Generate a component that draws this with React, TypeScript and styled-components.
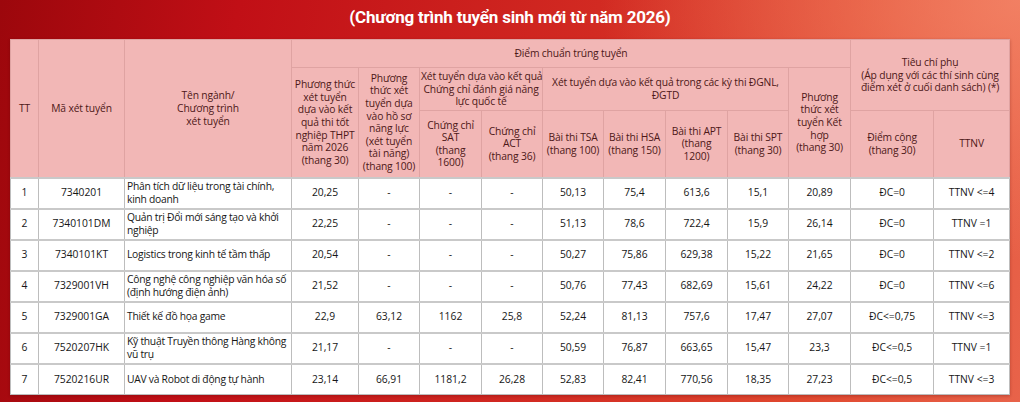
import React from "react";
import styled, { createGlobalStyle } from "styled-components";

const Global = createGlobalStyle`
  html, body { margin: 0; padding: 0; }
  body {
    width: 1020px;
    height: 402px;
    overflow: hidden;
    font-family: "Open Sans", "Noto Sans", sans-serif;
  }
`;

const Page = styled.div`
  width: 1020px;
  height: 402px;
  box-sizing: border-box;
  padding: 0 10px 0 10px;
  display: flex;
  flex-direction: column;
  overflow: hidden;
  background:
    radial-gradient(ellipse 420px 260px at 100% 0%, rgba(246, 140, 110, 0.75), rgba(246, 140, 110, 0) 100%),
    linear-gradient(100deg, #9c070c 0%, #c10f16 22%, #d22a22 55%, #e0482f 80%, #e8634a 100%);
`;

const Title = styled.h1`
  margin: 0;
  height: 39px;
  flex-shrink: 0;
  display: flex;
  align-items: center;
  justify-content: center;
  padding-bottom: 5px;
  box-sizing: border-box;
  color: #ffffff;
  font-family: "Roboto", "Noto Sans", sans-serif;
  font-weight: 700;
  font-size: 17px;
  letter-spacing: -0.2px;
`;

const Table = styled.table`
  width: 999px;
  flex-shrink: 0;
  table-layout: fixed;
  border-collapse: collapse;
  font-size: 10.3px;
  box-shadow: 0 1px 3px rgba(80, 0, 0, 0.3);
`;

const HeadRow = styled.tr<{ $h: number }>`
  height: ${(p) => p.$h}px;
`;

const BodyRow = styled.tr`
  height: 31px;
`;

const HeadCell = styled.th`
  background: #f2b7b6;
  color: #4e1818;
  font-weight: 400;
  border: 1px solid #dfa3a2;
  text-align: center;
  vertical-align: middle;
  line-height: 12.6px;
  padding: 0 1px;
  box-sizing: border-box;
  white-space: nowrap;
  letter-spacing: -0.15px;
`;

const Cell = styled.td<{ $left?: boolean }>`
  background: #ffffff;
  color: #161616;
  border: 1px solid #bdbdbd;
  border-top: 2px solid #c9c9c9;
  text-align: ${(p) => (p.$left ? "left" : "center")};
  vertical-align: middle;
  line-height: 13.5px;
  padding: 0 ${(p) => (p.$left ? "2px" : "3px")};
  letter-spacing: ${(p) => (p.$left ? "-0.25px" : "0")};
  box-sizing: border-box;
  overflow: hidden;
  white-space: nowrap;
`;

const widths = [28, 86, 167, 67, 61, 62, 61, 61, 62, 62, 61, 62, 83, 76];

const rows: string[][] = [
  ["1", "7340201", "Phân tích dữ liệu trong tài chính,\nkinh doanh", "20,25", "-", "-", "-", "50,13", "75,4", "613,6", "15,1", "20,89", "ĐC=0", "TTNV <=4"],
  ["2", "7340101DM", "Quản trị Đổi mới sáng tạo và khởi\nnghiệp", "22,25", "-", "-", "-", "51,13", "78,6", "722,4", "15,9", "26,14", "ĐC=0", "TTNV =1"],
  ["3", "7340101KT", "Logistics trong kinh tế tầm thấp", "20,54", "-", "-", "-", "50,27", "75,86", "629,38", "15,22", "21,65", "ĐC=0", "TTNV <=2"],
  ["4", "7329001VH", "Công nghệ công nghiệp văn hóa số\n(định hướng điện ảnh)", "21,52", "-", "-", "-", "50,76", "77,43", "682,69", "15,61", "24,22", "ĐC=0", "TTNV <=6"],
  ["5", "7329001GA", "Thiết kế đồ họa game", "22,9", "63,12", "1162", "25,8", "52,24", "81,13", "757,6", "17,47", "27,07", "ĐC<=0,75", "TTNV <=3"],
  ["6", "7520207HK", "Kỹ thuật Truyền thông Hàng không\nvũ trụ", "21,17", "-", "-", "-", "50,59", "76,87", "663,65", "15,47", "23,3", "ĐC<=0,5", "TTNV =1"],
  ["7", "7520216UR", "UAV và Robot di động tự hành", "23,14", "66,91", "1181,2", "26,28", "52,83", "82,41", "770,56", "18,35", "27,23", "ĐC<=0,5", "TTNV <=3"],
];

const lines = (s: string) =>
  s.split("\n").map((l, i, a) => (
    <React.Fragment key={i}>
      {l}
      {i < a.length - 1 && <br />}
    </React.Fragment>
  ));

export default function App() {
  return (
    <>
      <Global />
      <Page>
        <Title>(Chương trình tuyển sinh mới từ năm 2026)</Title>
        <Table>
          <colgroup>
            {widths.map((w, i) => (
              <col key={i} style={{ width: w }} />
            ))}
          </colgroup>
          <thead>
            <HeadRow $h={28}>
              <HeadCell rowSpan={3}>TT</HeadCell>
              <HeadCell rowSpan={3}>Mã xét tuyển</HeadCell>
              <HeadCell rowSpan={3}>{lines("Tên ngành/\nChương trình\nxét tuyển")}</HeadCell>
              <HeadCell colSpan={9}>Điểm chuẩn trúng tuyển</HeadCell>
              <HeadCell colSpan={2} rowSpan={2}>
                {lines("Tiêu chí phụ\n(Áp dụng với các thí sinh cùng\nđiểm xét ở cuối danh sách) (*)")}
              </HeadCell>
            </HeadRow>
            <HeadRow $h={43}>
              <HeadCell rowSpan={2}>
                {lines("Phương thức\nxét tuyển\ndựa vào kết\nquả thi tốt\nnghiệp THPT\nnăm 2026\n(thang 30)")}
              </HeadCell>
              <HeadCell rowSpan={2}>
                {lines("Phương\nthức xét\ntuyển dựa\nvào hồ sơ\nnăng lực\n(xét tuyển\ntài năng)\n(thang 100)")}
              </HeadCell>
              <HeadCell colSpan={2}>
                {lines("Xét tuyển dựa vào kết quả\nChứng chỉ đánh giá năng\nlực quốc tế")}
              </HeadCell>
              <HeadCell colSpan={4}>
                {lines("Xét tuyển dựa vào kết quả trong các kỳ thi ĐGNL,\nĐGTD")}
              </HeadCell>
              <HeadCell rowSpan={2}>{lines("Phương\nthức xét\ntuyển Kết\nhợp\n(thang 30)")}</HeadCell>
            </HeadRow>
            <HeadRow $h={67}>
              <HeadCell>{lines("Chứng chỉ\nSAT\n(thang\n1600)")}</HeadCell>
              <HeadCell>{lines("Chứng chỉ\nACT\n(thang 36)")}</HeadCell>
              <HeadCell>{lines("Bài thi TSA\n(thang 100)")}</HeadCell>
              <HeadCell>{lines("Bài thi HSA\n(thang 150)")}</HeadCell>
              <HeadCell>{lines("Bài thi APT\n(thang\n1200)")}</HeadCell>
              <HeadCell>{lines("Bài thi SPT\n(thang 30)")}</HeadCell>
              <HeadCell>{lines("Điểm cộng\n(thang 30)")}</HeadCell>
              <HeadCell>TTNV</HeadCell>
            </HeadRow>
          </thead>
          <tbody>
            {rows.map((r) => (
              <BodyRow key={r[0]}>
                {r.map((v, i) => (
                  <Cell key={i} $left={i === 2}>
                    {lines(v)}
                  </Cell>
                ))}
              </BodyRow>
            ))}
          </tbody>
        </Table>
      </Page>
    </>
  );
}
